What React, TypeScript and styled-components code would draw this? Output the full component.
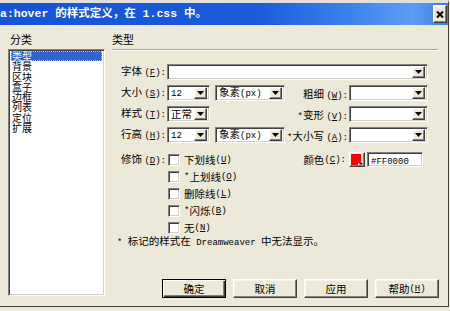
import React from 'react';
import styled, { createGlobalStyle, css } from 'styled-components';

const GlobalStyle = createGlobalStyle`
  html, body {
    margin: 0;
    padding: 0;
    background: #ece9d8;
  }
  body {
    font-family: "Noto Sans CJK SC", "Noto Sans", sans-serif;
    font-size: 10.5px;
    color: #000;
  }
`;

const sunken = css`
  box-sizing: border-box;
  border: 1px solid;
  border-color: #808080 #ffffff #ffffff #808080;
  box-shadow: inset 1px 1px #404040, inset -1px -1px #d4d0c8;
  background: #fff;
`;

const raised = css`
  box-sizing: border-box;
  border: 1px solid;
  border-color: #ffffff #404040 #404040 #ffffff;
  box-shadow: inset -1px -1px #808080, inset 1px 1px #f6f4ec;
  background: #ece9d8;
`;

const Latin = styled.span`
  font-family: "Liberation Mono", monospace;
  font-size: 9px;
`;

const Window = styled.div`
  width: 449px;
  height: 307px;
  box-sizing: border-box;
  border-top: 3px solid #e2e0d8;
  border-right: 1px solid #404040;
  border-bottom: 1px solid #404040;
  display: flex;
  flex-direction: column;
  background: #ece9d8;
`;

const TitleBar = styled.div`
  flex: none;
  height: 22px;
  display: flex;
  align-items: center;
  color: #fff;
  background: linear-gradient(
    90deg,
    #1454d6 0%,
    #1a5cdc 58%,
    #3b83ec 78%,
    #5c9ef4 92%,
    #3a7ee9 100%
  );
`;

const Title = styled.div`
  font-family: "Liberation Mono", "Noto Sans CJK SC", monospace;
  font-weight: bold;
  font-size: 11.5px;
  line-height: 22px;
  white-space: nowrap;
`;

const CloseButton = styled.div`
  ${raised}
  width: 14px;
  height: 18px;
  margin-left: auto;
  margin-right: 1px;
  display: flex;
  align-items: center;
  justify-content: center;
`;

const Body = styled.div`
  flex: 1;
  min-height: 0;
  display: flex;
  gap: 7px;
  padding: 7px 10px 8px 8px;
`;

const LeftCol = styled.div`
  width: 97px;
  flex: none;
  display: flex;
  flex-direction: column;
`;

const GroupTitle = styled.div<{ $indent: number }>`
  height: 17px;
  line-height: 15px;
  padding-left: ${(p) => p.$indent}px;
  font-size: 11px;
  white-space: nowrap;
`;

const ListBox = styled.div`
  ${sunken}
  height: 247px;
  padding: 1px 2px;
`;

const ListItem = styled.div<{ $selected?: boolean }>`
  font-size: 10px;
  line-height: 10.3px;
  height: 10.3px;
  padding-left: 1px;
  white-space: nowrap;
  ${(p) =>
    p.$selected &&
    css`
      color: #fff;
      background: #2f62d2;
      outline: 1px dotted #a8c4f4;
      outline-offset: -1px;
    `}
`;

const RightCol = styled.div`
  flex: 1;
  display: flex;
  flex-direction: column;
`;

const Rule = styled.div`
  border-top: 1px solid #aca899;
  border-bottom: 1px solid #ffffff;
`;

const Form = styled.div`
  margin-top: 13px;
  padding-right: 10px;
  display: flex;
  flex-direction: column;
  gap: 5px;
`;

const Row = styled.div`
  display: flex;
  align-items: center;
  height: 16px;
`;

const FieldLabel = styled.div`
  width: 55px;
  flex: none;
  box-sizing: border-box;
  padding-right: 1px;
  text-align: right;
  white-space: nowrap;
  line-height: 16px;
`;

const Controls = styled.div`
  display: flex;
  align-items: center;
  gap: 5px;
`;

const SideLabel = styled.div`
  flex: 1;
  text-align: right;
  padding-right: 1px;
  white-space: nowrap;
`;

const SelectBox = styled.div<{ $w: number }>`
  ${sunken}
  width: ${(p) => p.$w}px;
  height: 16px;
  padding: 2px;
  display: flex;
  align-items: center;
`;

const SelectValue = styled.div`
  flex: 1;
  padding-left: 1px;
  line-height: 12px;
  white-space: nowrap;
`;

const DropButton = styled.div`
  ${raised}
  width: 13px;
  height: 12px;
  flex: none;
  display: flex;
  align-items: center;
  justify-content: center;
`;

const DecorRow = styled.div`
  margin-top: 8px;
  padding-right: 15px;
  display: flex;
  align-items: flex-start;
`;

const CheckList = styled.div`
  margin-left: 1px;
  display: flex;
  flex-direction: column;
`;

const CheckRow = styled.div`
  height: 17px;
  display: flex;
  align-items: center;
  white-space: nowrap;
`;

const CheckBox = styled.div`
  ${sunken}
  width: 12px;
  height: 12px;
  margin-right: 4px;
  flex: none;
`;

const ColorArea = styled.div`
  flex: 1;
  height: 17px;
  display: flex;
  align-items: center;
  justify-content: flex-end;
`;

const ColorButton = styled.div`
  ${raised}
  width: 16px;
  height: 15px;
  margin-left: 3px;
  display: flex;
`;

const HexInput = styled.div`
  ${sunken}
  width: 56px;
  height: 15px;
  margin-left: 2px;
  padding: 0 3px;
  line-height: 13px;
`;

const Footnote = styled.div`
  padding-left: 5px;
  height: 10px;
  line-height: 10px;
  white-space: nowrap;
`;

const ButtonRow = styled.div`
  margin-top: auto;
  margin-right: -1px;
  display: flex;
  justify-content: flex-end;
  gap: 7px;
`;

const DialogButton = styled.div<{ $default?: boolean }>`
  ${raised}
  width: 64px;
  height: 19px;
  display: flex;
  align-items: center;
  justify-content: center;
  ${(p) =>
    p.$default &&
    css`
      border: 1px solid #000;
      box-shadow: inset 1px 1px #fff, inset -1px -1px #404040,
        inset -2px -2px #808080;
    `}
`;

function Arrow() {
  return (
    <svg width="7" height="4" viewBox="0 0 7 4">
      <polygon points="0,0 7,0 3.5,4" fill="#000" />
    </svg>
  );
}

function Acc({ k }: { k: string }) {
  return (
    <Latin>
      (<u>{k}</u>)
    </Latin>
  );
}

function Select({ w, value }: { w: number; value?: React.ReactNode }) {
  return (
    <SelectBox $w={w}>
      <SelectValue>{value}</SelectValue>
      <DropButton>
        <Arrow />
      </DropButton>
    </SelectBox>
  );
}

const categories = ['类型', '背景', '区块', '盒子', '边框', '列表', '定位', '扩展'];

const decorations: [string, string][] = [
  ['下划线', 'U'],
  ['*上划线', 'O'],
  ['删除线', 'L'],
  ['*闪烁', 'B'],
  ['无', 'N'],
];

const px = (
  <>
    象素<Latin>(px)</Latin>
  </>
);

export default function App() {
  return (
    <>
      <GlobalStyle />
      <Window>
        <TitleBar>
          <Title>a:hover 的样式定义，在 1.css 中。</Title>
          <CloseButton>
            <svg width="8" height="7" viewBox="0 0 8 7">
              <path d="M1 0.5 L7 6.5 M7 0.5 L1 6.5" stroke="#000" strokeWidth="2" />
            </svg>
          </CloseButton>
        </TitleBar>
        <Body>
          <LeftCol>
            <GroupTitle $indent={2}>分类</GroupTitle>
            <ListBox>
              {categories.map((c, i) => (
                <ListItem key={c} $selected={i === 0}>
                  {c}
                </ListItem>
              ))}
            </ListBox>
          </LeftCol>
          <RightCol>
            <GroupTitle $indent={0}>类型</GroupTitle>
            <Rule />
            <Form>
              <Row>
                <FieldLabel>
                  字体 <Acc k="F" />
                  <Latin>:</Latin>
                </FieldLabel>
                <Select w={261} />
              </Row>
              <Row>
                <FieldLabel>
                  大小 <Acc k="S" />
                  <Latin>:</Latin>
                </FieldLabel>
                <Controls>
                  <Select w={43} value={<Latin>12</Latin>} />
                  <Select w={70} value={px} />
                </Controls>
                <SideLabel>
                  粗细 <Acc k="W" />
                  <Latin>:</Latin>
                </SideLabel>
                <Select w={79} />
              </Row>
              <Row>
                <FieldLabel>
                  样式 <Acc k="T" />
                  <Latin>:</Latin>
                </FieldLabel>
                <Controls>
                  <Select w={43} value="正常" />
                </Controls>
                <SideLabel>
                  <Latin>*</Latin>变形 <Acc k="V" />
                  <Latin>:</Latin>
                </SideLabel>
                <Select w={79} />
              </Row>
              <Row>
                <FieldLabel>
                  行高 <Acc k="H" />
                  <Latin>:</Latin>
                </FieldLabel>
                <Controls>
                  <Select w={43} value={<Latin>12</Latin>} />
                  <Select w={70} value={px} />
                </Controls>
                <SideLabel>
                  <Latin>*</Latin>大小写 <Acc k="A" />
                  <Latin>:</Latin>
                </SideLabel>
                <Select w={79} />
              </Row>
            </Form>
            <DecorRow>
              <FieldLabel>
                修饰 <Acc k="D" />
                <Latin>:</Latin>
              </FieldLabel>
              <CheckList>
                {decorations.map(([label, k]) => (
                  <CheckRow key={k}>
                    <CheckBox />
                    {label.startsWith('*') ? (
                      <>
                        <Latin>*</Latin>
                        {label.slice(1)}
                      </>
                    ) : (
                      label
                    )}{' '}
                    <Acc k={k} />
                  </CheckRow>
                ))}
              </CheckList>
              <ColorArea>
                颜色 <Acc k="C" />
                <Latin>:</Latin>
                <ColorButton>
                  <svg width="14" height="13" viewBox="0 0 14 13">
                    <rect x="1" y="1" width="10" height="9" fill="#ff0000" />
                    <rect x="1" y="10" width="7" height="2" fill="#ff0000" />
                    <polygon points="9,10 13,10 11,12" fill="#000" />
                  </svg>
                </ColorButton>
                <HexInput>
                  <Latin>#FF0000</Latin>
                </HexInput>
              </ColorArea>
            </DecorRow>
            <Footnote>
              <Latin>* </Latin>标记的样式在<Latin> Dreamweaver </Latin>中无法显示。
            </Footnote>
            <ButtonRow>
              <DialogButton $default>确定</DialogButton>
              <DialogButton>取消</DialogButton>
              <DialogButton>应用</DialogButton>
              <DialogButton>
                帮助 <Acc k="H" />
              </DialogButton>
            </ButtonRow>
          </RightCol>
        </Body>
      </Window>
    </>
  );
}
